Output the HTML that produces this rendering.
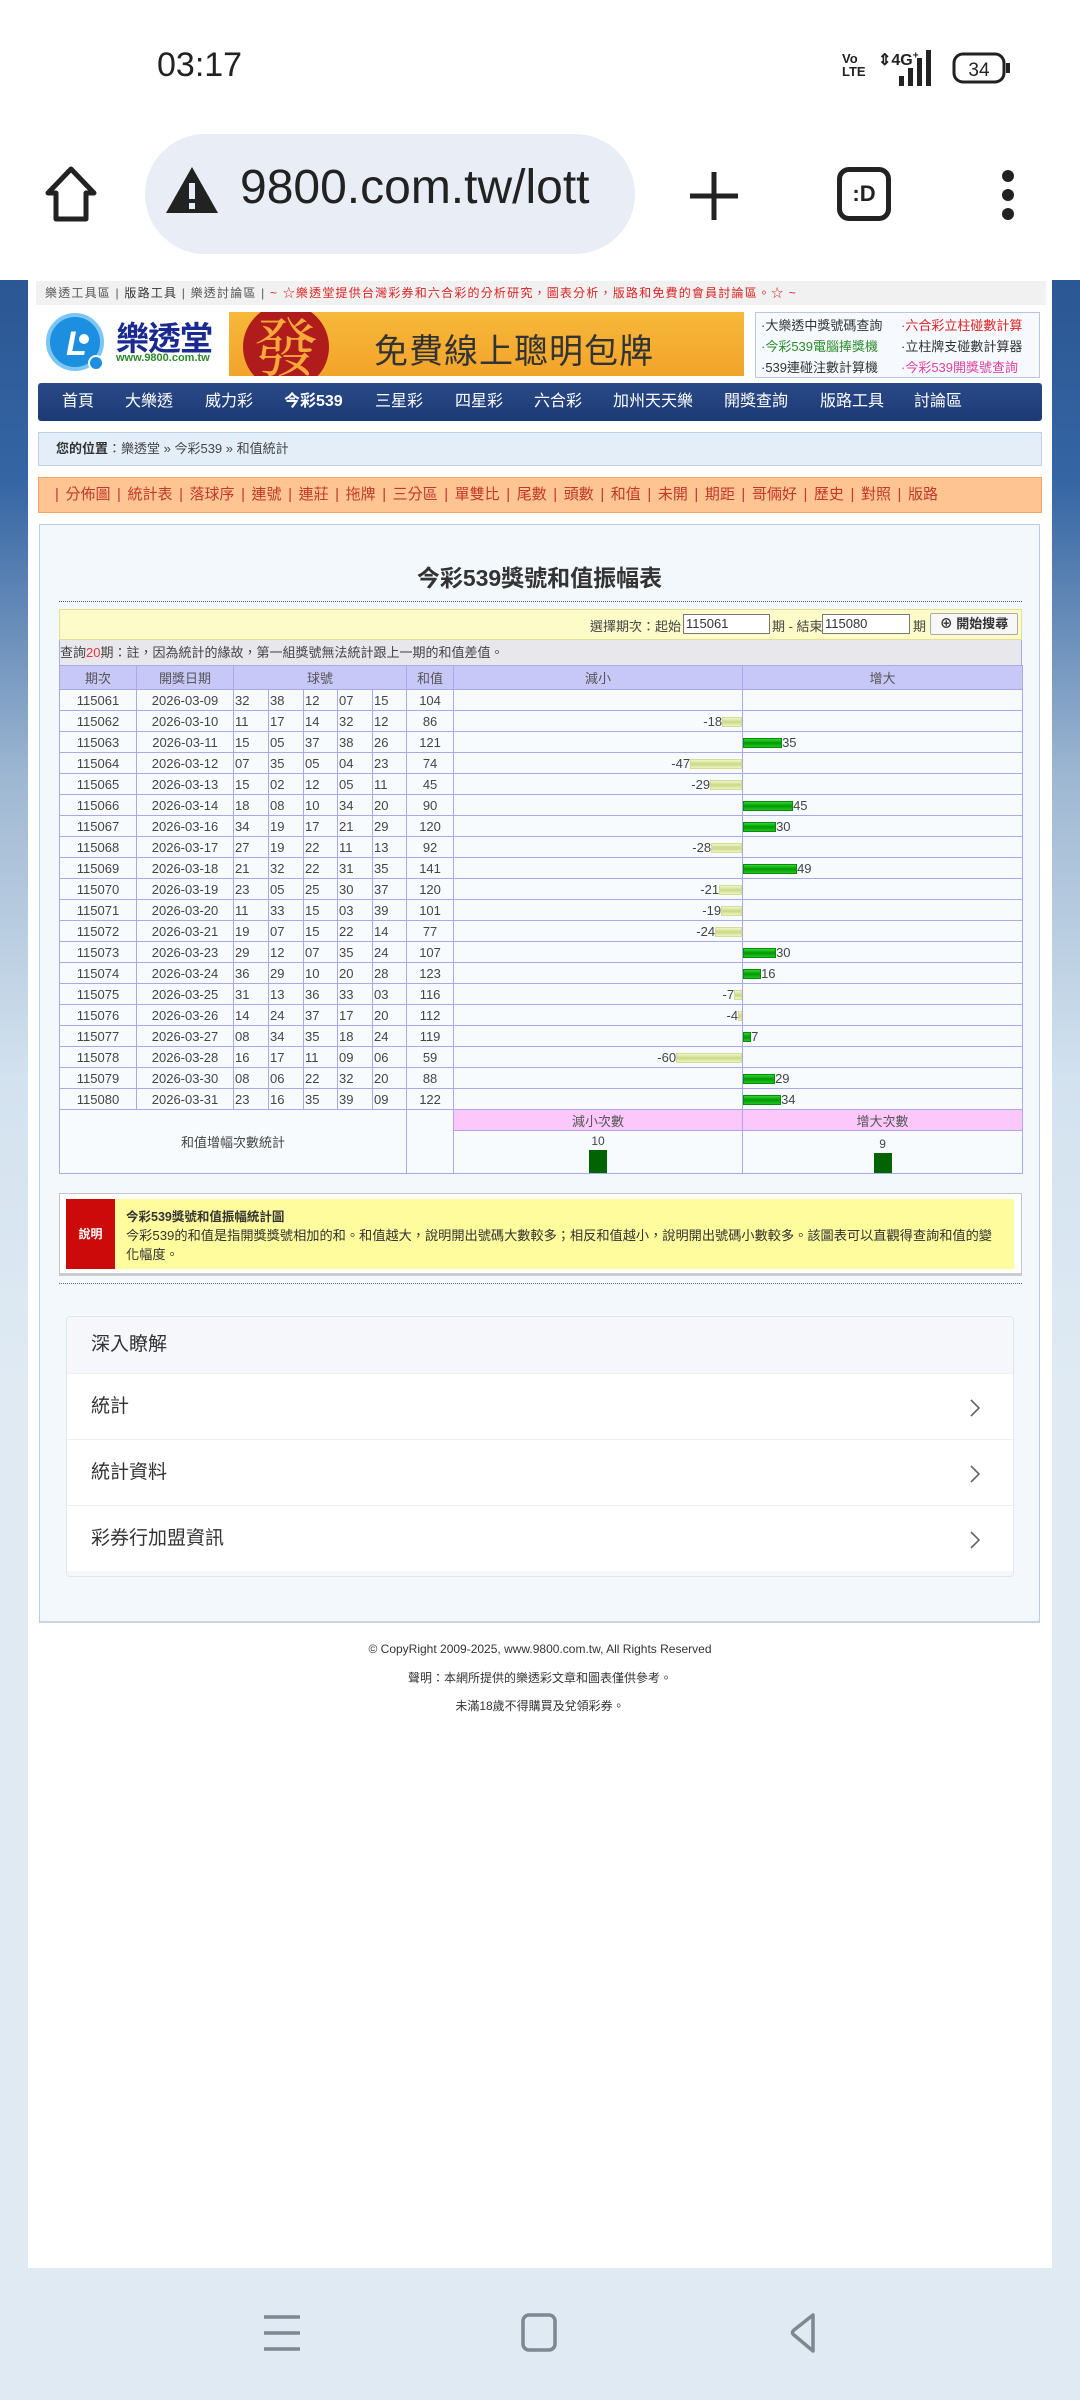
<!DOCTYPE html>
<html><head><meta charset="utf-8">
<style>
*{margin:0;padding:0;box-sizing:border-box}
body{width:1080px;height:2400px;position:relative;overflow:hidden;background:#fff;font-family:"Liberation Sans","Noto Sans CJK TC",sans-serif;color:#333}
.a{position:absolute}
#side{left:0;top:280px;width:1080px;height:1988px;background:linear-gradient(to bottom,#2b5794 0px,#3565a3 200px,#9fb8d2 500px,#d3e2ef 800px,#dfeaf3 1100px,#dfeaf3 100%)}
#page{left:28px;top:280px;width:1024px;height:1988px;background:#fff}
#bot{left:0;top:2268px;width:1080px;height:132px;background:#dfeaf3}
.nav a{position:absolute;top:0;line-height:38px;color:#fff;font-size:16px}
table{border-collapse:collapse;table-layout:fixed}
td{border:1px solid #a9a9e6;height:21px;font-size:13px;color:#444;text-align:center;padding:0;white-space:nowrap;overflow:visible}
td.b{text-align:left;padding-left:1px}
td.n{text-align:right;padding-right:0}
td.p{text-align:left}
.bn{display:inline-block;height:10px;vertical-align:middle;background:linear-gradient(#f2f6cc,#c9d886 50%,#eef3c0);border:1px solid #d4dc9a}
.bp{display:inline-block;height:10px;vertical-align:middle;background:linear-gradient(#33d633,#009900 50%,#22c422);border:1px solid #0a8a0a}
.ds a{color:#333}
.li{position:absolute;left:0;width:948px;height:66px;background:#fff;border-top:1px solid #eef0f3;font-size:19px;line-height:66px;padding-left:24px;color:#333}
.li svg{position:absolute;right:34px;top:24px}
</style></head><body>

<!-- status bar -->
<div class="a" style="left:157px;top:46px;font-size:34px;color:#222">03:17</div>
<div class="a" style="left:842px;top:52px;font-size:13px;font-weight:bold;line-height:13px;color:#222">Vo<br>LTE</div>
<div class="a" style="left:878px;top:50px;font-size:16px;font-weight:bold;color:#222">⇕4G<sup style="font-size:10px">+</sup></div>
<svg class="a" style="left:895px;top:50px" width="40" height="36"><rect x="4" y="26" width="5" height="10" fill="#222"/><rect x="13" y="18" width="5" height="18" fill="#222"/><rect x="22" y="8" width="5" height="28" fill="#222"/><rect x="31" y="0" width="5" height="36" fill="#222"/></svg>
<svg class="a" style="left:952px;top:52px" width="60" height="32"><rect x="2" y="2" width="50" height="28" rx="9" fill="none" stroke="#222" stroke-width="3"/><rect x="54" y="11" width="4" height="10" fill="#222"/><text x="27" y="24" font-size="19" text-anchor="middle" fill="#222" font-family="Liberation Sans">34</text></svg>

<!-- browser bar -->
<svg class="a" style="left:44px;top:165px" width="54" height="58"><path d="M27 4 L50 28 L42 28 L42 54 L12 54 L12 28 L4 28 Z" fill="none" stroke="#222" stroke-width="5" stroke-linejoin="round"/></svg>
<div class="a" style="left:145px;top:134px;width:490px;height:120px;border-radius:60px;background:#e8edf6"></div>
<svg class="a" style="left:164px;top:165px" width="56" height="50"><path d="M28 2 L54 48 L2 48 Z" fill="#222"/><rect x="25" y="18" width="6" height="16" fill="#e8edf6"/><rect x="25" y="38" width="6" height="6" fill="#e8edf6"/></svg>
<div class="a" style="left:240px;top:160px;font-size:48px;color:#222;width:370px;overflow:hidden;white-space:nowrap">9800.com.tw/lott</div>
<svg class="a" style="left:688px;top:170px" width="52" height="52"><path d="M26 2V50M2 26H50" stroke="#222" stroke-width="5"/></svg>
<div class="a" style="left:837px;top:167px;width:54px;height:54px;border:5px solid #222;border-radius:12px;font-size:22px;font-weight:bold;text-align:center;line-height:44px;color:#222">:D</div>
<svg class="a" style="left:998px;top:168px" width="20" height="54"><circle cx="10" cy="8" r="6" fill="#222"/><circle cx="10" cy="27" r="6" fill="#222"/><circle cx="10" cy="46" r="6" fill="#222"/></svg>

<div id="side" class="a"></div>
<div id="page" class="a"></div>
<div id="bot" class="a"></div>

<!-- top links -->
<div class="a" style="left:36px;top:281px;width:1010px;height:24px;background:#f1f1f1;font-size:12px;line-height:24px;padding-left:9px;color:#555;letter-spacing:1.2px;white-space:nowrap;overflow:hidden">樂透工具區 | <span style="color:#333">版路工具</span> | 樂透討論區 | <span style="color:#d22">~ ☆樂透堂提供台灣彩券和六合彩的分析研究，圖表分析，版路和免費的會員討論區。☆ ~</span></div>

<!-- logo -->
<svg class="a" style="left:46px;top:313px" width="62" height="60"><circle cx="29" cy="29" r="27" fill="#1c8fe0" stroke="#7cc6f4" stroke-width="4"/><text x="20" y="42" font-size="34" font-weight="bold" font-style="italic" fill="#fff" font-family="Liberation Sans">L</text><circle cx="38" cy="26" r="5" fill="#fff"/><circle cx="50" cy="50" r="7" fill="#1c8fe0" stroke="#fff" stroke-width="2"/></svg>
<div class="a" style="left:116px;top:312px;font-size:33px;font-weight:bold;color:#1a2a90;letter-spacing:-1px">樂透堂</div>
<div class="a" style="left:116px;top:352px;font-size:11px;font-weight:bold;color:#2a8a2a">www.9800.com.tw</div>

<!-- banner -->
<div class="a" style="left:229px;top:312px;width:515px;height:64px;background:linear-gradient(#f7b83a,#f2a42a);overflow:hidden">
 <div class="a" style="left:14px;top:-8px;width:86px;height:86px;border-radius:50%;background:#b01c1c;color:#f6a83a;font-size:64px;line-height:80px;text-align:center;font-family:'Noto Serif CJK SC',serif">發</div>
 <div class="a" style="left:145px;top:12px;font-size:34px;color:#333;letter-spacing:1px">免費線上聰明包牌</div>
</div>

<!-- right link box -->
<div class="a ds" style="left:755px;top:312px;width:285px;height:66px;border:1px solid #b9c6dc;background:#f6f9fe;font-size:13px;line-height:21px;padding:2px 0 0 5px">
 <div class="a" style="left:5px;top:2px"><a>·大樂透中獎號碼查詢</a><br><a style="color:#2a8a2a">·今彩539電腦捧獎機</a><br><a>·539連碰注數計算機</a></div>
 <div class="a" style="left:145px;top:2px"><a style="color:#d22">·六合彩立柱碰數計算</a><br><a>·立柱牌支碰數計算器</a><br><a style="color:#e040a0">·今彩539開獎號查詢</a></div>
</div>

<!-- nav -->
<div class="a nav" style="left:38px;top:383px;width:1004px;height:38px;background:linear-gradient(#2a4a88,#1c3a74);border-radius:3px">
<a style="left:24px">首頁</a><a style="left:87px">大樂透</a><a style="left:167px">威力彩</a><a style="left:246px;font-weight:bold">今彩539</a><a style="left:337px">三星彩</a><a style="left:417px">四星彩</a><a style="left:496px">六合彩</a><a style="left:575px">加州天天樂</a><a style="left:686px">開獎查詢</a><a style="left:782px">版路工具</a><a style="left:876px">討論區</a>
</div>

<!-- location -->
<div class="a" style="left:38px;top:432px;width:1004px;height:34px;background:#e3eef9;border:1px solid #bed0e2;font-size:13px;line-height:32px;padding-left:17px;color:#444"><b style="color:#333">您的位置</b>：樂透堂 » 今彩539 » 和值統計</div>

<!-- orange menu -->
<div class="a" style="left:38px;top:477px;width:1004px;height:36px;background:#fec592;border:1px solid #f2a566;font-size:15px;line-height:34px;padding-left:16px;color:#c0392b;word-spacing:2.4px;white-space:nowrap">| 分佈圖 | 統計表 | 落球序 | 連號 | 連莊 | 拖牌 | 三分區 | 單雙比 | 尾數 | 頭數 | 和值 | 未開 | 期距 | 哥倆好 | 歷史 | 對照 | 版路</div>

<!-- main box -->
<div class="a" style="left:39px;top:524px;width:1001px;height:1099px;background:#f3f8fc;border:1px solid #b9cfe0;border-bottom:2px solid #c6d6e4"></div>
<div class="a" style="left:39px;top:559px;width:1001px;text-align:center;font-size:23px;font-weight:bold;color:#333">今彩539獎號和值振幅表</div>
<div class="a" style="left:59px;top:601px;width:963px;border-top:1px dotted #555"></div>

<!-- search bar -->
<div class="a" style="left:59px;top:609px;width:963px;height:31px;background:#fdfbc8;border:1px solid #e4df96"></div>
<div class="a" style="left:590px;top:616px;font-size:13px;color:#444">選擇期次：起始</div>
<div class="a" style="left:683px;top:614px;width:87px;height:20px;background:#fff;border:1px solid #777;font-size:13px;line-height:18px;padding-left:2px">115061</div>
<div class="a" style="left:772px;top:616px;font-size:13px;color:#444">期 - 結束</div>
<div class="a" style="left:822px;top:614px;width:88px;height:20px;background:#fff;border:1px solid #777;font-size:13px;line-height:18px;padding-left:2px">115080</div>
<div class="a" style="left:913px;top:616px;font-size:13px;color:#444">期</div>
<div class="a" style="left:930px;top:613px;width:88px;height:22px;background:#f7f7f7;border:1px solid #aaa;border-radius:2px;font-size:13px;font-weight:bold;line-height:20px;text-align:center;color:#333">⊕ 開始搜尋</div>

<!-- note -->
<div class="a" style="left:59px;top:640px;width:963px;height:25px;background:#e8e8ec;border-left:1px solid #a9a9e6;border-right:1px solid #a9a9e6;font-size:13px;line-height:25px;color:#444">查詢<span style="color:#e33">20</span>期：註，因為統計的緣故，第一組獎號無法統計跟上一期的和值差值。</div>

<table class="a" style="left:59px;top:665px;width:963px;background:#f8fbfe">
<colgroup><col style="width:77px"><col style="width:97px"><col style="width:35px"><col style="width:35px"><col style="width:34px"><col style="width:35px"><col style="width:34px"><col style="width:47px"><col style="width:289px"><col style="width:280px"></colgroup>
<tr style="background:#c8c8f8"><td style="height:24px;color:#555">期次</td><td style="color:#555">開獎日期</td><td colspan="5" style="color:#555">球號</td><td style="color:#555">和值</td><td style="color:#555">減小</td><td style="color:#555">增大</td></tr>
<tr><td>115061</td><td>2026-03-09</td><td class="b">32</td><td class="b">38</td><td class="b">12</td><td class="b">07</td><td class="b">15</td><td>104</td><td></td><td></td></tr>
<tr><td>115062</td><td>2026-03-10</td><td class="b">11</td><td class="b">17</td><td class="b">14</td><td class="b">32</td><td class="b">12</td><td>86</td><td class="n">-18<span class="bn" style="width:20px"></span></td><td></td></tr>
<tr><td>115063</td><td>2026-03-11</td><td class="b">15</td><td class="b">05</td><td class="b">37</td><td class="b">38</td><td class="b">26</td><td>121</td><td></td><td class="p"><span class="bp" style="width:39px"></span>35</td></tr>
<tr><td>115064</td><td>2026-03-12</td><td class="b">07</td><td class="b">35</td><td class="b">05</td><td class="b">04</td><td class="b">23</td><td>74</td><td class="n">-47<span class="bn" style="width:52px"></span></td><td></td></tr>
<tr><td>115065</td><td>2026-03-13</td><td class="b">15</td><td class="b">02</td><td class="b">12</td><td class="b">05</td><td class="b">11</td><td>45</td><td class="n">-29<span class="bn" style="width:32px"></span></td><td></td></tr>
<tr><td>115066</td><td>2026-03-14</td><td class="b">18</td><td class="b">08</td><td class="b">10</td><td class="b">34</td><td class="b">20</td><td>90</td><td></td><td class="p"><span class="bp" style="width:50px"></span>45</td></tr>
<tr><td>115067</td><td>2026-03-16</td><td class="b">34</td><td class="b">19</td><td class="b">17</td><td class="b">21</td><td class="b">29</td><td>120</td><td></td><td class="p"><span class="bp" style="width:33px"></span>30</td></tr>
<tr><td>115068</td><td>2026-03-17</td><td class="b">27</td><td class="b">19</td><td class="b">22</td><td class="b">11</td><td class="b">13</td><td>92</td><td class="n">-28<span class="bn" style="width:31px"></span></td><td></td></tr>
<tr><td>115069</td><td>2026-03-18</td><td class="b">21</td><td class="b">32</td><td class="b">22</td><td class="b">31</td><td class="b">35</td><td>141</td><td></td><td class="p"><span class="bp" style="width:54px"></span>49</td></tr>
<tr><td>115070</td><td>2026-03-19</td><td class="b">23</td><td class="b">05</td><td class="b">25</td><td class="b">30</td><td class="b">37</td><td>120</td><td class="n">-21<span class="bn" style="width:23px"></span></td><td></td></tr>
<tr><td>115071</td><td>2026-03-20</td><td class="b">11</td><td class="b">33</td><td class="b">15</td><td class="b">03</td><td class="b">39</td><td>101</td><td class="n">-19<span class="bn" style="width:21px"></span></td><td></td></tr>
<tr><td>115072</td><td>2026-03-21</td><td class="b">19</td><td class="b">07</td><td class="b">15</td><td class="b">22</td><td class="b">14</td><td>77</td><td class="n">-24<span class="bn" style="width:27px"></span></td><td></td></tr>
<tr><td>115073</td><td>2026-03-23</td><td class="b">29</td><td class="b">12</td><td class="b">07</td><td class="b">35</td><td class="b">24</td><td>107</td><td></td><td class="p"><span class="bp" style="width:33px"></span>30</td></tr>
<tr><td>115074</td><td>2026-03-24</td><td class="b">36</td><td class="b">29</td><td class="b">10</td><td class="b">20</td><td class="b">28</td><td>123</td><td></td><td class="p"><span class="bp" style="width:18px"></span>16</td></tr>
<tr><td>115075</td><td>2026-03-25</td><td class="b">31</td><td class="b">13</td><td class="b">36</td><td class="b">33</td><td class="b">03</td><td>116</td><td class="n">-7<span class="bn" style="width:8px"></span></td><td></td></tr>
<tr><td>115076</td><td>2026-03-26</td><td class="b">14</td><td class="b">24</td><td class="b">37</td><td class="b">17</td><td class="b">20</td><td>112</td><td class="n">-4<span class="bn" style="width:4px"></span></td><td></td></tr>
<tr><td>115077</td><td>2026-03-27</td><td class="b">08</td><td class="b">34</td><td class="b">35</td><td class="b">18</td><td class="b">24</td><td>119</td><td></td><td class="p"><span class="bp" style="width:8px"></span>7</td></tr>
<tr><td>115078</td><td>2026-03-28</td><td class="b">16</td><td class="b">17</td><td class="b">11</td><td class="b">09</td><td class="b">06</td><td>59</td><td class="n">-60<span class="bn" style="width:66px"></span></td><td></td></tr>
<tr><td>115079</td><td>2026-03-30</td><td class="b">08</td><td class="b">06</td><td class="b">22</td><td class="b">32</td><td class="b">20</td><td>88</td><td></td><td class="p"><span class="bp" style="width:32px"></span>29</td></tr>
<tr><td>115080</td><td>2026-03-31</td><td class="b">23</td><td class="b">16</td><td class="b">35</td><td class="b">39</td><td class="b">09</td><td>122</td><td></td><td class="p"><span class="bp" style="width:38px"></span>34</td></tr>
<tr><td colspan="7" rowspan="2" style="color:#444">和值增幅次數統計</td><td rowspan="2"></td><td style="background:#fcc8fc;color:#555">減小次數</td><td style="background:#fcc8fc;color:#555">增大次數</td></tr>
<tr><td style="height:43px;vertical-align:bottom"><div style="font-size:12px;line-height:14px">10</div><div style="width:18px;height:23px;background:#006400;margin:2px auto 0"></div></td><td style="vertical-align:bottom"><div style="font-size:12px;line-height:14px">9</div><div style="width:18px;height:20px;background:#006400;margin:2px auto 0"></div></td></tr>
</table>

<!-- description -->
<div class="a" style="left:59px;top:1193px;width:963px;height:83px;background:#fff;border:1px solid #c4c4c4;border-bottom:3px solid #ccc"></div>
<div class="a" style="left:66px;top:1199px;width:49px;height:70px;background:#cc0a0a;color:#fff;font-size:12px;font-weight:bold;text-align:center;line-height:70px">說明</div>
<div class="a" style="left:115px;top:1199px;width:899px;height:70px;background:#fefc9c"></div>
<div class="a" style="left:126px;top:1206px;font-size:12.5px;font-weight:bold;color:#333">今彩539獎號和值振幅統計圖</div>
<div class="a" style="left:126px;top:1226px;width:874px;font-size:13.2px;line-height:19px;color:#333">今彩539的和值是指開獎獎號相加的和。和值越大，說明開出號碼大數較多；相反和值越小，說明開出號碼小數較多。該圖表可以直觀得查詢和值的變化幅度。</div>
<div class="a" style="left:59px;top:1283px;width:963px;border-top:1px dotted #666"></div>

<!-- deep card -->
<div class="a" style="left:66px;top:1316px;width:948px;height:261px;background:#f5f7fa;border:1px solid #e2e6ea;border-radius:4px;overflow:hidden">
 <div class="a" style="left:24px;top:0;line-height:56px;font-size:19px;color:#333">深入瞭解</div>
 <div class="li" style="top:56px">統計<svg width="12" height="20"><path d="M2 2 L10 10 L2 18" fill="none" stroke="#666" stroke-width="1.6"/></svg></div>
 <div class="li" style="top:122px">統計資料<svg width="12" height="20"><path d="M2 2 L10 10 L2 18" fill="none" stroke="#666" stroke-width="1.6"/></svg></div>
 <div class="li" style="top:188px">彩券行加盟資訊<svg width="12" height="20"><path d="M2 2 L10 10 L2 18" fill="none" stroke="#666" stroke-width="1.6"/></svg></div>
</div>

<!-- footer -->
<div class="a" style="left:28px;top:1635px;width:1024px;text-align:center;font-size:12px;line-height:28.5px;color:#333">© CopyRight 2009-2025, www.9800.com.tw, All Rights Reserved<br>聲明：本網所提供的樂透彩文章和圖表僅供參考。<br>未滿18歲不得購買及兌領彩券。</div>

<!-- nav bar bottom -->
<svg class="a" style="left:262px;top:2313px" width="40" height="40"><path d="M2 4H38M2 20H38M2 36H38" stroke="#7d8893" stroke-width="3.5"/></svg>
<svg class="a" style="left:521px;top:2313px" width="38" height="40"><rect x="2" y="2" width="32" height="35" rx="6" fill="none" stroke="#7d8893" stroke-width="3.5"/></svg>
<svg class="a" style="left:780px;top:2313px" width="40" height="40"><path d="M33 2 L33 38 L14 22 Q11 20 14 17 Z" fill="none" stroke="#7d8893" stroke-width="3.5" stroke-linejoin="round"/></svg>
</body></html>
